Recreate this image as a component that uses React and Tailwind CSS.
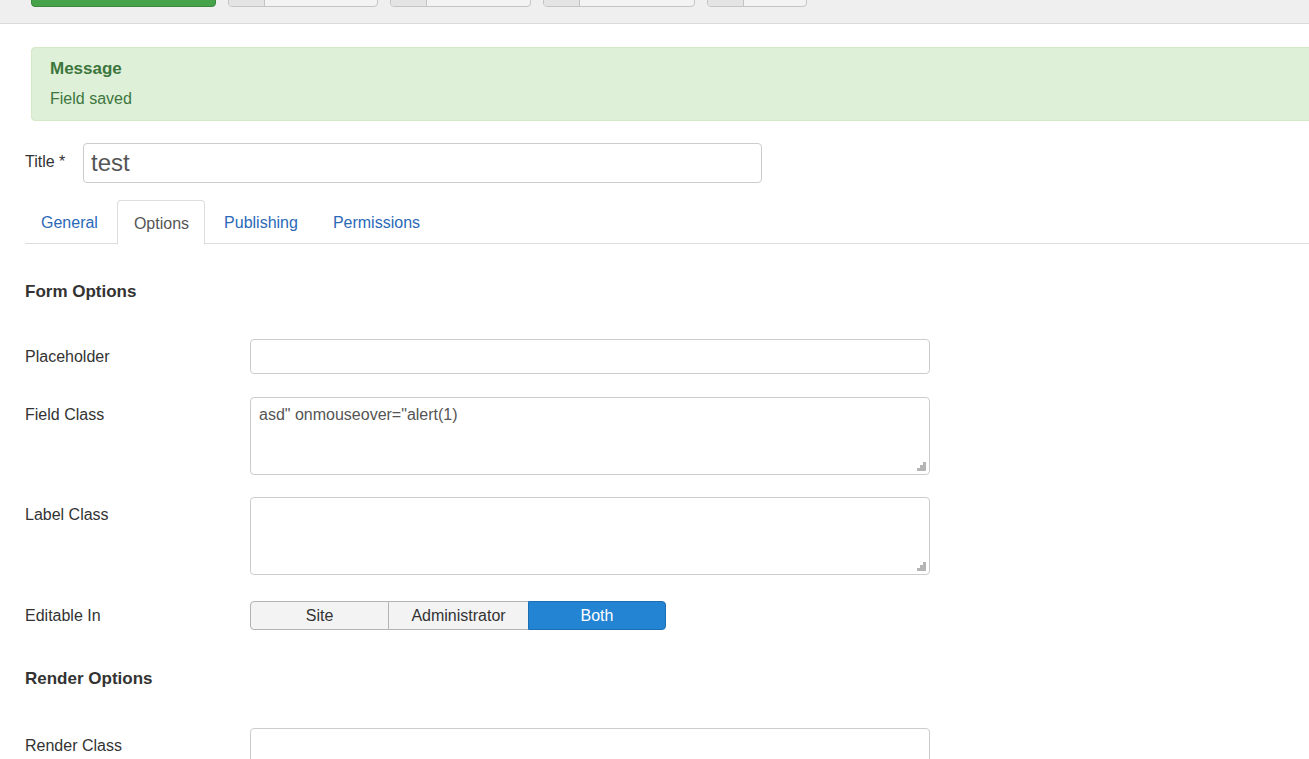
import React from 'react';

const font = { fontFamily: '"Liberation Sans", Arial, sans-serif' };

function Grip() {
    return (
        <svg className="absolute right-[4px] bottom-[4px] pointer-events-none" width="9" height="9" viewBox="0 0 9 9">
            <rect x="6" y="0" width="3" height="3" fill="#b5b5b5" />
            <rect x="3" y="3" width="3" height="3" fill="#b5b5b5" />
            <rect x="6" y="3" width="3" height="3" fill="#b5b5b5" />
            <rect x="0" y="6" width="3" height="3" fill="#b5b5b5" />
            <rect x="3" y="6" width="3" height="3" fill="#b5b5b5" />
            <rect x="6" y="6" width="3" height="3" fill="#b5b5b5" />
        </svg>
    );
}

function ToolButton({ width }) {
    return (
        <div className={`flex h-[30px] -mt-[23px] rounded-[4px] border border-[#c4c4c4] bg-[#f3f3f3] overflow-hidden ${width}`}>
            <div className="w-[36px] bg-[#e4e4e4] border-r border-[#c4c4c4]"></div>
            <div className="flex-1"></div>
        </div>
    );
}

function Row({ label, children, className = '', center = false }) {
    return (
        <div className={`flex ${center ? 'items-center' : 'items-start'} ${className}`}>
            <span className={`w-[225px] shrink-0 text-[16px] leading-[20px] text-[#333] ${center ? 'pt-[1px]' : 'pt-[8px]'}`}>{label}</span>
            {children}
        </div>
    );
}

export default function App() {
    return (
        <div className="min-h-screen bg-white overflow-hidden" style={font}>
            {/* Toolbar */}
            <div className="h-[24px] bg-[#efefef] border-b border-[#dadada] flex items-start pl-[31px] gap-[12px]">
                <div className="h-[30px] -mt-[23px] w-[185px] rounded-[4px] bg-[#46a34a] border border-[#3b8a3e]"></div>
                <ToolButton width="w-[150px]" />
                <ToolButton width="w-[141px]" />
                <ToolButton width="w-[152px]" />
                <ToolButton width="w-[100px]" />
            </div>

            {/* Message */}
            <div className="ml-[31px] mt-[23px] w-[1300px] h-[74px] bg-[#dff0d8] border border-[#d3e8c6] rounded-[4px] pl-[18px] pt-[10px] text-[#3c763d]">
                <h4 className="text-[17px] font-bold leading-[22px]">Message</h4>
                <p className="text-[16px] leading-[20px] mt-[9px]">Field saved</p>
            </div>

            <div className="pl-[25px]">
                {/* Title */}
                <div className="flex items-center mt-[22px]">
                    <span className="w-[58px] text-[16px] text-[#333] -mt-[3px]">Title *</span>
                    <input
                        readOnly
                        value="test"
                        className="w-[679px] h-[40px] rounded-[4px] border border-[#ccc] px-[7px] text-[24px] text-[#555] outline-none"
                        style={font}
                    />
                </div>

                {/* Tabs */}
                <div className="flex mt-[17px] border-b border-[#ddd] h-[44px] text-[16px]">
                    <div className="px-[16px] pt-[11px] text-[#2a69b8]">General</div>
                    <div className="pl-[16px] pr-[15px] pt-[11px] text-[#555] bg-white border border-[#ddd] border-b-white rounded-t-[4px] h-[45px] ml-[3px]">Options</div>
                    <div className="px-[17px] pt-[11px] text-[#2a69b8] ml-[2px]">Publishing</div>
                    <div className="px-[16px] pt-[11px] text-[#2a69b8] ml-[2px]">Permissions</div>
                </div>

                <h3 className="text-[17px] font-bold text-[#333] mt-[38px] leading-[20px]">Form Options</h3>

                <Row label="Placeholder" className="mt-[37px]">
                    <input readOnly className="w-[680px] h-[35px] rounded-[4px] border border-[#ccc] outline-none" />
                </Row>

                <Row label="Field Class" className="mt-[23px]">
                    <div className="relative">
                        <textarea
                            readOnly
                            value={'asd" onmouseover="alert(1)'}
                            className="block w-[680px] h-[78px] rounded-[4px] border border-[#ccc] px-[8px] py-[5px] text-[16px] text-[#555] resize-none outline-none"
                            style={font}
                        />
                        <Grip />
                    </div>
                </Row>

                <Row label="Label Class" className="mt-[22px]">
                    <div className="relative">
                        <textarea
                            readOnly
                            className="block w-[680px] h-[78px] rounded-[4px] border border-[#ccc] px-[8px] py-[5px] text-[16px] text-[#555] resize-none outline-none"
                        />
                        <Grip />
                    </div>
                </Row>

                <Row label="Editable In" className="mt-[25px]" center>
                    <div className="flex h-[30px] text-[16px] pt-[1px]">
                        <div className="w-[139px] flex items-center justify-center bg-[#f3f3f3] border border-[#b3b3b3] rounded-l-[4px] text-[#333]">Site</div>
                        <div className="w-[139px] flex items-center justify-center bg-[#f3f3f3] border-y border-[#b3b3b3] text-[#333]">Administrator</div>
                        <div className="w-[138px] flex items-center justify-center bg-[#2384d3] border border-[#1d6fb3] rounded-r-[4px] text-white">Both</div>
                    </div>
                </Row>

                <h3 className="text-[17px] font-bold text-[#333] mt-[39px] leading-[20px]">Render Options</h3>

                <Row label="Render Class" className="mt-[39px]">
                    <input readOnly className="w-[680px] h-[35px] rounded-[4px] border border-[#ccc] outline-none" />
                </Row>
            </div>
        </div>
    );
}
